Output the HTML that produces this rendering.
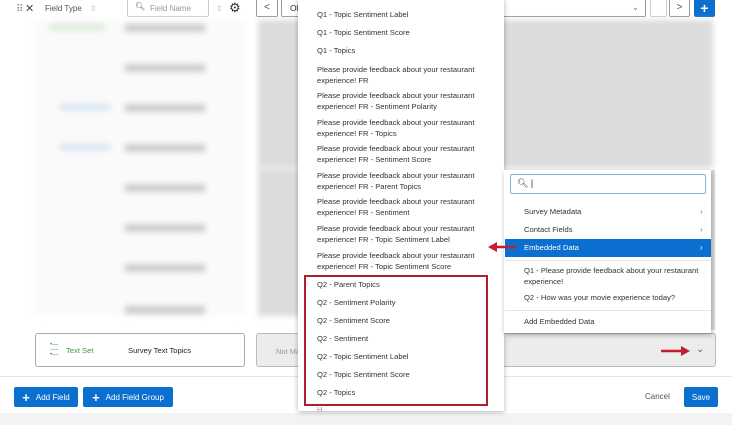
<!DOCTYPE html>
<html><head><style>
*{margin:0;padding:0;box-sizing:border-box}
body{width:732px;height:425px;position:relative;overflow:hidden;background:#fff;font-family:"Liberation Sans",sans-serif;color:#333}
.a{position:absolute}
.blur{filter:blur(3px)}
.t{font-size:7.6px;color:#333;position:absolute;left:317px;line-height:10.5px;white-space:nowrap}
.s{font-size:7.6px;color:#333;position:absolute;left:524px;line-height:10.5px;white-space:nowrap}
.btn{background:#0b6fcf;color:#fff;font-size:8px;border-radius:2px;display:flex;align-items:center;justify-content:center;gap:6px}
</style></head><body>
<!-- header -->
<div class="a" style="left:16px;top:4px;font-size:10px;color:#888">⠿</div>
<div class="a" style="left:25px;top:2px;font-size:11px;color:#444">✕</div>
<div class="a" style="left:45px;top:4px;font-size:8px;color:#555">Field Type</div>
<div class="a" style="left:90px;top:4px;font-size:8px;color:#ccc">⇕</div>
<div class="a" style="left:127px;top:-2px;width:82px;height:19px;border:1px solid #ccc;border-radius:2px"></div>
<div class="a" style="left:135px;top:2px;font-size:8px;color:#555">🔍︎</div>
<div class="a" style="left:150px;top:4px;font-size:8px;color:#999">Field Name</div>
<div class="a" style="left:216px;top:4px;font-size:8px;color:#ccc">⇕</div>
<div class="a" style="left:229px;top:0px;font-size:13px;color:#333">⚙</div>
<div class="a" style="left:256px;top:-2px;width:22px;height:19px;border:1px solid #999;border-radius:2px;font-size:10px;text-align:center;line-height:17px;color:#555">&lt;</div>
<div class="a" style="left:281px;top:-2px;width:365px;height:19px;border:1px solid #999;border-radius:2px;font-size:8.5px;padding:4px 8px">Ol<span style="position:absolute;right:6px;top:3px;color:#777">⌄</span></div>
<div class="a" style="left:650px;top:-2px;width:17px;height:19px;border:1px solid #ccc;border-radius:2px"></div>
<div class="a" style="left:669px;top:-2px;width:21px;height:19px;border:1px solid #999;border-radius:2px;font-size:10px;text-align:center;line-height:17px;color:#555">&gt;</div>
<div class="a btn" style="left:694px;top:-2px;width:21px;height:19px;font-size:14px;font-weight:bold">+</div>
<!-- blurred rows -->
<div class="a blur" style="left:35px;top:20px;width:210px;height:295px;background:#fafafa"></div>
<div class="a blur" style="left:258px;top:20px;width:455px;height:148px;background:#dcdcdc"></div>
<div class="a blur" style="left:258px;top:168px;width:48px;height:148px;background:#dcdcdc"></div>
<div class="a" style="left:700px;top:170px;width:15px;height:160px;background:#ddd"></div>
<div class="a blur" style="left:125px;top:24px;width:80px;height:8px;background:#ccc"></div>
<div class="a blur" style="left:125px;top:64px;width:80px;height:8px;background:#ccc"></div>
<div class="a blur" style="left:125px;top:104px;width:80px;height:8px;background:#ccc"></div>
<div class="a blur" style="left:125px;top:144px;width:80px;height:8px;background:#ccc"></div>
<div class="a blur" style="left:125px;top:184px;width:80px;height:8px;background:#ccc"></div>
<div class="a blur" style="left:125px;top:224px;width:80px;height:8px;background:#ccc"></div>
<div class="a blur" style="left:125px;top:264px;width:80px;height:8px;background:#ccc"></div>
<div class="a blur" style="left:125px;top:306px;width:80px;height:8px;background:#ccc"></div>
<div class="a blur" style="left:50px;top:24px;width:55px;height:6px;background:#d8ecd4"></div>
<div class="a blur" style="left:60px;top:104px;width:50px;height:6px;background:#d4e4f4"></div>
<div class="a blur" style="left:60px;top:144px;width:50px;height:6px;background:#d4e4f4"></div>
<!-- last row -->
<div class="a" style="left:35px;top:333px;width:210px;height:34px;border:1px solid #aaa;border-radius:3px;background:#fff"></div>
<div class="a" style="left:50px;top:343px;font-size:6px;color:#3a9a3a;line-height:5px">•—<br>◦—<br>•—</div>
<div class="a" style="left:66px;top:346px;font-size:7.6px;color:#3a9a3a">Text Set</div>
<div class="a" style="left:128px;top:346px;font-size:7.6px;color:#222">Survey Text Topics</div>
<div class="a" style="left:256px;top:333px;width:460px;height:34px;border:1px solid #bbb;border-radius:3px;background:#ececec"></div>
<div class="a" style="left:276px;top:347px;font-size:7.5px;color:#999">Not Ma</div>
<div class="a" style="left:696px;top:344px;font-size:10px;color:#666">⌄</div>
<div class="a" style="left:0;top:376px;width:732px;height:1px;background:#e4e4e4"></div>
<div class="a" style="left:0;top:413px;width:732px;height:12px;background:#f3f3f3"></div>
<div class="a btn" style="left:14px;top:387px;width:64px;height:20px"><b style="font-size:13px">+</b>Add Field</div>
<div class="a btn" style="left:83px;top:387px;width:90px;height:20px"><b style="font-size:13px">+</b>Add Field Group</div>
<div class="a" style="left:645px;top:392px;font-size:8px;color:#555">Cancel</div>
<div class="a btn" style="left:684px;top:387px;width:34px;height:20px">Save</div>
<!-- dropdown -->
<div class="a" style="left:298px;top:-2px;width:206px;height:413px;background:#fff;box-shadow:0 1px 5px rgba(0,0,0,.3)"></div>
<div class="t" style="top:10px">Q1 - Topic Sentiment Label</div>
<div class="t" style="top:28px">Q1 - Topic Sentiment Score</div>
<div class="t" style="top:46px">Q1 - Topics</div>
<div class="t" style="top:65px">Please provide feedback about your restaurant<br>experience! FR</div>
<div class="t" style="top:91px">Please provide feedback about your restaurant<br>experience! FR - Sentiment Polarity</div>
<div class="t" style="top:118px">Please provide feedback about your restaurant<br>experience! FR - Topics</div>
<div class="t" style="top:144px">Please provide feedback about your restaurant<br>experience! FR - Sentiment Score</div>
<div class="t" style="top:171px">Please provide feedback about your restaurant<br>experience! FR - Parent Topics</div>
<div class="t" style="top:197px">Please provide feedback about your restaurant<br>experience! FR - Sentiment</div>
<div class="t" style="top:224px">Please provide feedback about your restaurant<br>experience! FR - Topic Sentiment Label</div>
<div class="t" style="top:251px">Please provide feedback about your restaurant<br>experience! FR - Topic Sentiment Score</div>
<div class="t" style="top:280px">Q2 - Parent Topics</div>
<div class="t" style="top:298px">Q2 - Sentiment Polarity</div>
<div class="t" style="top:316px">Q2 - Sentiment Score</div>
<div class="t" style="top:334px">Q2 - Sentiment</div>
<div class="t" style="top:352px">Q2 - Topic Sentiment Label</div>
<div class="t" style="top:370px">Q2 - Topic Sentiment Score</div>
<div class="t" style="top:388px">Q2 - Topics</div>
<div class="t" style="top:405px;color:#999">H</div>
<div class="a" style="left:304px;top:275px;width:184px;height:131px;border:2px solid #b01e2e"></div>
<!-- submenu -->
<div class="a" style="left:504px;top:170px;width:207px;height:163px;background:#fff;box-shadow:1px 2px 5px rgba(0,0,0,.3)"></div>
<div class="a" style="left:510px;top:174px;width:196px;height:20px;border:1px solid #7fb3e6;border-radius:2px;font-size:9px;padding:3px 6px;color:#333">🔍︎ |</div>
<div class="s" style="top:207px">Survey Metadata</div><div class="a" style="left:700px;top:207px;font-size:8px;color:#777">›</div>
<div class="s" style="top:225px">Contact Fields</div><div class="a" style="left:700px;top:225px;font-size:8px;color:#777">›</div>
<div class="a" style="left:505px;top:239px;width:206px;height:18px;background:#0b6fcf"></div>
<div class="s" style="top:243px;color:#fff">Embedded Data</div><div class="a" style="left:700px;top:243px;font-size:8px;color:#fff">›</div>
<div class="a" style="left:505px;top:260px;width:206px;height:1px;background:#e5e5e5"></div>
<div class="s" style="top:266px">Q1 - Please provide feedback about your restaurant<br>experience!</div>
<div class="s" style="top:293px">Q2 - How was your movie experience today?</div>
<div class="a" style="left:505px;top:310px;width:206px;height:1px;background:#e5e5e5"></div>
<div class="s" style="top:317px">Add Embedded Data</div>
<!-- arrows -->
<svg class="a" style="left:488px;top:241px" width="30" height="12"><line x1="6" y1="6" x2="28" y2="6" stroke="#c0202e" stroke-width="2.5"/><path d="M0 6 L9 1 L9 11Z" fill="#c0202e"/></svg>
<svg class="a" style="left:661px;top:345px" width="30" height="12"><line x1="0" y1="6" x2="22" y2="6" stroke="#c0202e" stroke-width="2.5"/><path d="M29 6 L20 1 L20 11Z" fill="#c0202e"/></svg>
</body></html>
